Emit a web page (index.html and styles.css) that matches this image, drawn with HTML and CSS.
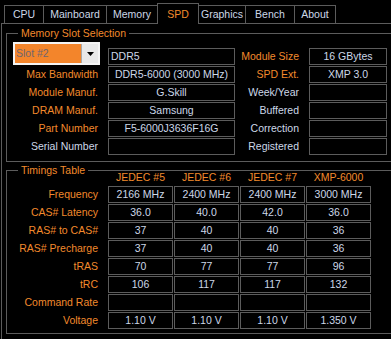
FILE: index.html
```html
<!DOCTYPE html>
<html lang="en">
  <head>
    <meta charset="UTF-8" />
    <title>CPU-Z SPD</title>
    <link rel="stylesheet" href="styles.css" />
  </head>
  <body>
    <!-- TABS ============ -->
    <nav class="tabs">
      <div class="tab tab-cpu">CPU</div>
      <div class="tab tab-mainboard">Mainboard</div>
      <div class="tab tab-memory">Memory</div>
      <div class="tab tab-spd active">SPD</div>
      <div class="tab tab-graphics">Graphics</div>
      <div class="tab tab-bench">Bench</div>
      <div class="tab tab-about">About</div>
    </nav>

    <!-- PANEL ============ -->
    <main class="panel">
      <!-- MEMORY SLOT SELECTION ============ -->
      <fieldset class="group slot-group">
        <legend>Memory Slot Selection</legend>
        <div class="slot-grid">
          <div class="select">
            <span class="select-value">Slot #2</span>
            <span class="select-button">
              <svg width="7" height="4" viewBox="0 0 7 4"><polygon points="0,0 7,0 3.5,4" fill="#000" /></svg>
            </span>
          </div>
          <div class="box left">DDR5</div>
          <div class="label">Module Size</div>
          <div class="box">16 GBytes</div>

          <div class="label">Max Bandwidth</div>
          <div class="box">DDR5-6000 (3000 MHz)</div>
          <div class="label">SPD Ext.</div>
          <div class="box">XMP 3.0</div>

          <div class="label">Module Manuf.</div>
          <div class="box">G.Skill</div>
          <div class="label dim">Week/Year</div>
          <div class="box"></div>

          <div class="label">DRAM Manuf.</div>
          <div class="box">Samsung</div>
          <div class="label dim">Buffered</div>
          <div class="box"></div>

          <div class="label">Part Number</div>
          <div class="box">F5-6000J3636F16G</div>
          <div class="label dim">Correction</div>
          <div class="box"></div>

          <div class="label dim">Serial Number</div>
          <div class="box"></div>
          <div class="label dim">Registered</div>
          <div class="box"></div>
        </div>
      </fieldset>

      <!-- TIMINGS TABLE ============ -->
      <fieldset class="group timings-group">
        <legend>Timings Table</legend>
        <div class="timings-grid">
          <div class="head-row">
            <span></span>
            <span class="col-head">JEDEC #5</span>
            <span class="col-head">JEDEC #6</span>
            <span class="col-head">JEDEC #7</span>
            <span class="col-head">XMP-6000</span>
          </div>

          <div class="label">Frequency</div>
          <div class="box">2166 MHz</div>
          <div class="box">2400 MHz</div>
          <div class="box">2400 MHz</div>
          <div class="box">3000 MHz</div>

          <div class="label">CAS# Latency</div>
          <div class="box">36.0</div>
          <div class="box">40.0</div>
          <div class="box">42.0</div>
          <div class="box">36.0</div>

          <div class="label">RAS# to CAS#</div>
          <div class="box">37</div>
          <div class="box">40</div>
          <div class="box">40</div>
          <div class="box">36</div>

          <div class="label">RAS# Precharge</div>
          <div class="box">37</div>
          <div class="box">40</div>
          <div class="box">40</div>
          <div class="box">36</div>

          <div class="label">tRAS</div>
          <div class="box">70</div>
          <div class="box">77</div>
          <div class="box">77</div>
          <div class="box">96</div>

          <div class="label">tRC</div>
          <div class="box">106</div>
          <div class="box">117</div>
          <div class="box">117</div>
          <div class="box">132</div>

          <div class="label">Command Rate</div>
          <div class="box"></div>
          <div class="box"></div>
          <div class="box"></div>
          <div class="box"></div>

          <div class="label">Voltage</div>
          <div class="box">1.10 V</div>
          <div class="box">1.10 V</div>
          <div class="box">1.10 V</div>
          <div class="box">1.350 V</div>
        </div>
      </fieldset>
    </main>
  </body>
</html>
```

FILE: styles.css
```css
/* GLOBAL ============ */

* {
  box-sizing: border-box;
}

:root {
  --orange: #f28a2c;
  --text: #cdd8e8;
  --line: #5c5c5c;
}

body {
  margin: 0;
  background: #000;
  color: var(--text);
  font-family: 'Liberation Sans', Arial, sans-serif;
  font-size: 10.5px;
  line-height: 13px;
  overflow: hidden;
}

/* TABS ============ */

.tabs {
  display: flex;
  align-items: flex-end;
  height: 23px;
  padding-left: 4px;
}

.tab {
  display: flex;
  align-items: center;
  justify-content: center;
  height: 18px;
  margin-left: -1px;
  border: 1px solid var(--line);
  border-bottom: 0;
}

.tab:first-child {
  margin-left: 0;
}

.tab.active {
  position: relative;
  z-index: 1;
  height: 21px;
  margin-bottom: -1px;
  background: #000;
  color: var(--orange);
}

.tab-cpu { width: 40px; }
.tab-mainboard { width: 64px; }
.tab-memory { width: 52px; }
.tab-spd { width: 42px; }
.tab-graphics { width: 48px; }
.tab-bench { width: 50px; }
.tab-about { width: 42px; }

/* PANEL (runs past the right edge, so no right border) ============ */

.panel {
  width: 390px;
  height: 316px;
  margin-left: 1px;
  padding: 2px 0 0 4px;
  border-left: 1px solid var(--line);
  border-top: 1px solid var(--line);
}

.group {
  width: 385px;
  min-width: 0;
  margin: 0;
  border: 1px solid var(--line);
  border-right: 0;
}

.group legend {
  margin-left: 11px;
  padding: 0 3px;
  line-height: 14px;
  color: var(--orange);
}

.slot-group {
  padding: 2px 0 6px 0;
}

.timings-group {
  margin-top: 1px;
  padding: 0 0 4px 0;
}

/* SHARED CELLS ============ */

.label {
  display: flex;
  align-items: center;
  justify-content: flex-end;
  height: 17px;
  padding-right: 2px;
  color: var(--orange);
  white-space: nowrap;
}

.label.dim {
  color: var(--text);
}

.box {
  display: flex;
  align-items: center;
  justify-content: center;
  height: 17px;
  border: 1px solid var(--line);
  white-space: nowrap;
}

.box.left {
  justify-content: flex-start;
  padding-left: 2px;
}

/* SLOT GRID ============ */

.slot-grid {
  display: grid;
  grid-template-columns: 93px 127px 58px 78px;
  grid-template-rows: 23px;
  grid-auto-rows: 17px;
  column-gap: 8px;
  row-gap: 1px;
  align-items: end;
}

.select {
  display: flex;
  justify-self: end;
  width: 87px;
  height: 23px;
  border: 2px solid #f4f4f4;
  background: #f3852b;
}

.select-value {
  flex: 1;
  display: flex;
  align-items: center;
  padding-left: 1px;
  color: #6f6570;
}

.select-button {
  display: flex;
  align-items: center;
  justify-content: center;
  width: 17px;
  border-left: 1px solid #a8a8a8;
  background: #e8e8e8;
}

/* TIMINGS GRID ============ */

.timings-grid {
  display: grid;
  grid-template-columns: 100px repeat(4, 65px);
  grid-template-rows: 8px;
  grid-auto-rows: 17px;
  column-gap: 1px;
  row-gap: 1px;
}

.timings-grid .label {
  padding-right: 9px;
}

.head-row {
  grid-column: 1 / -1;
  display: grid;
  grid-template-columns: 100px repeat(4, 65px);
  column-gap: 1px;
  height: 14px;
  margin-top: -6px;
  align-self: start;
}

.col-head {
  text-align: center;
  color: var(--orange);
}
```
